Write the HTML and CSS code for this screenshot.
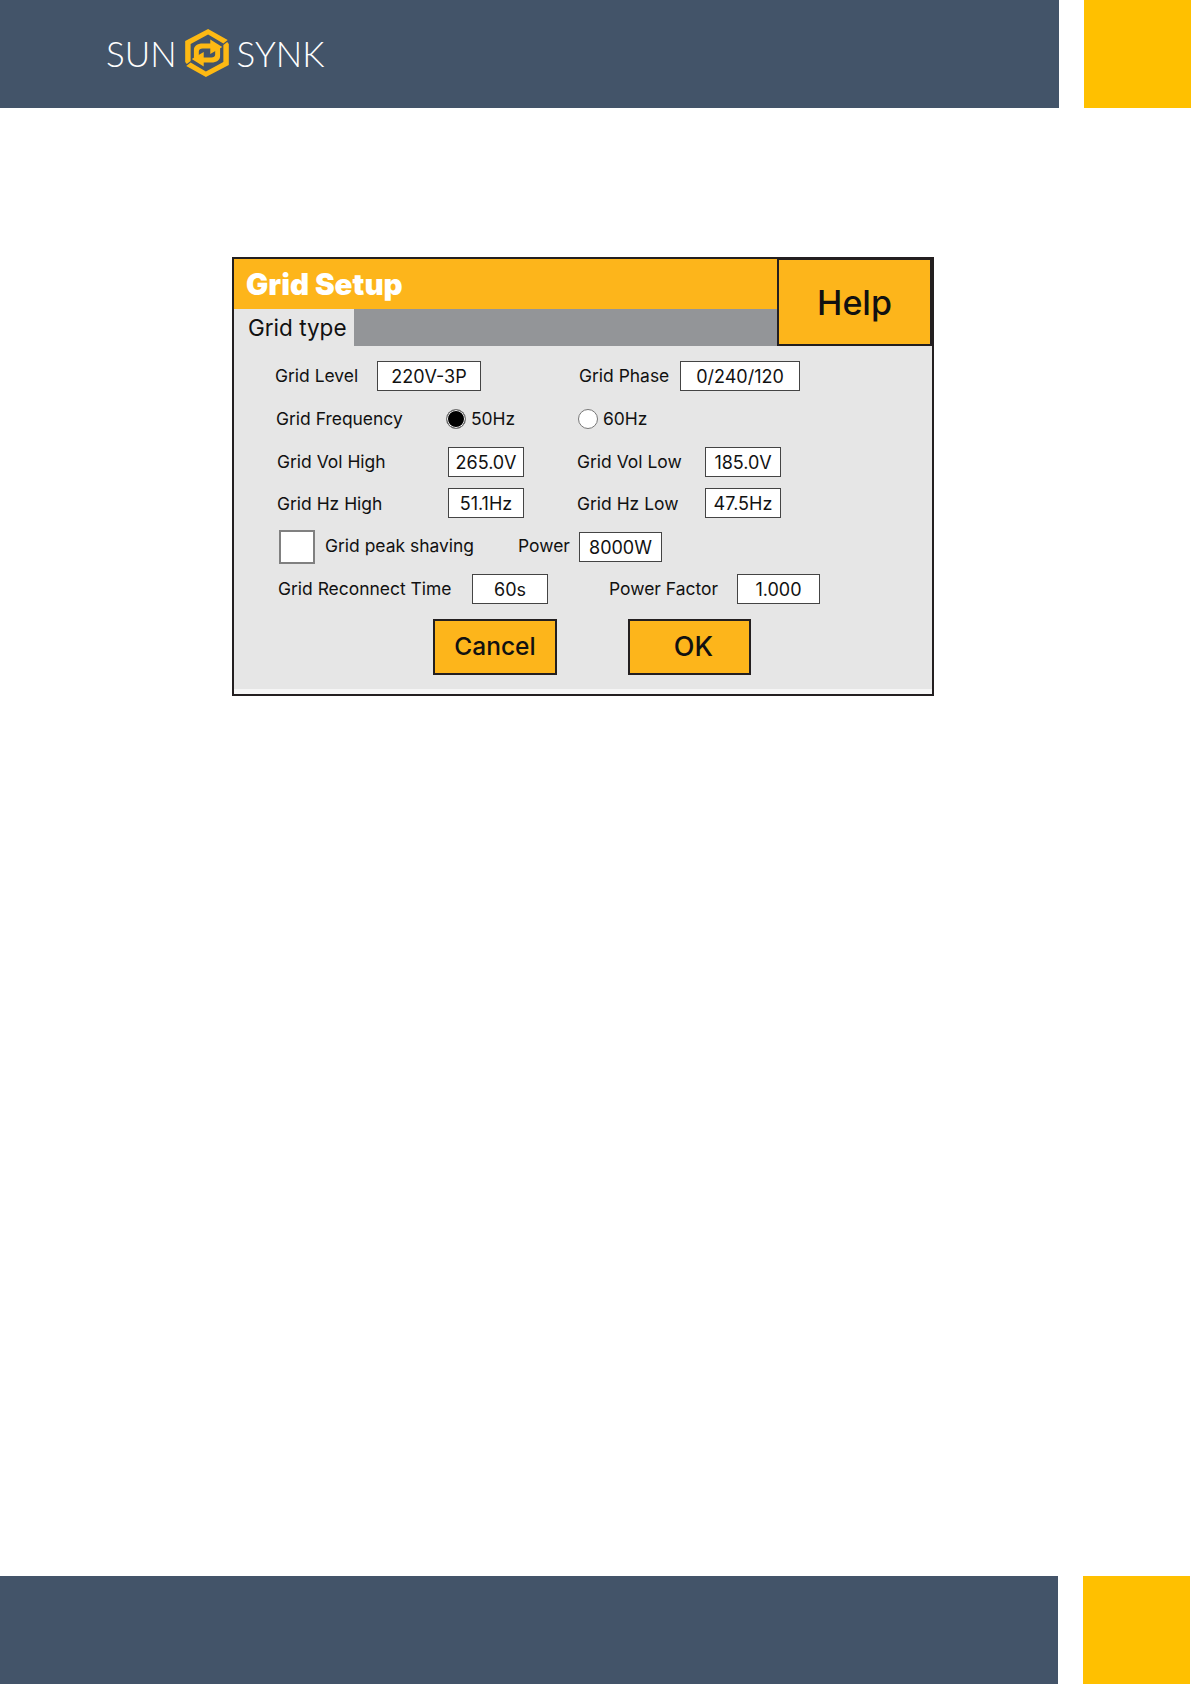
FILE: index.html
```html
<!DOCTYPE html>
<html lang="en">
<head>
<meta charset="utf-8">
<title>Grid Setup</title>
<link rel="stylesheet" href="styles.css">
</head>
<body>
<div class="page">
  <header class="band band-top">
    <div class="navy navy-top">
      <div class="logo">
        <span class="logo-word">SUN</span>
        <svg class="logo-mark" viewBox="8 5 44 52" width="48" height="52" preserveAspectRatio="none" aria-hidden="true">
          <path d="M10 19L31 7L49 18L45 21.500L31 12.500L15 22V39L11.500 42L10 40Z" fill="#fdb913"/>
          <path d="M50 43L29 55L11 44L15 40.500L29 49.500L45 40V23L48.500 20L50 22Z" fill="#fdb913"/>
          <path d="M44 25L33 17.500V21.500H26C21 21.500 18 24 18 28V38L22.500 34V29.500C22.500 27.500 24 26.500 26 26.500H33V32Z" fill="#fdb913"/>
          <path d="M16 37L27 44.500V40.500H34C39 40.500 42 38 42 34V24L37.500 28V32.500C37.500 34.500 36 35.500 34 35.500H27V30Z" fill="#fdb913"/>
        </svg>
        <span class="logo-word">SYNK</span>
      </div>
    </div>
    <div class="gold-tab gold-top"></div>
  </header>

  <main class="content">
    <section class="dialog">
      <div class="dialog-head">
        <div class="head-left">
          <div class="title-bar">Grid Setup</div>
          <div class="tab-bar"><span class="tab">Grid type</span></div>
        </div>
        <div class="help">Help</div>
      </div>
      <div class="dialog-body">
        <div class="row row-1">
          <span class="lbl l1a">Grid Level</span>
          <span class="box b1a">220V-3P</span>
          <span class="lbl l1b">Grid Phase</span>
          <span class="box b1b">0/240/120</span>
        </div>
        <div class="row row-2">
          <span class="lbl l2a">Grid Frequency</span>
          <span class="radio radio-on"></span>
          <span class="lbl l2b">50Hz</span>
          <span class="radio radio-off"></span>
          <span class="lbl l2c">60Hz</span>
        </div>
        <div class="row row-3">
          <span class="lbl l3a">Grid Vol High</span>
          <span class="box b3">265.0V</span>
          <span class="lbl l3b">Grid Vol Low</span>
          <span class="box b3">185.0V</span>
        </div>
        <div class="row row-4">
          <span class="lbl l3a">Grid Hz High</span>
          <span class="box b3">51.1Hz</span>
          <span class="lbl l3b">Grid Hz Low</span>
          <span class="box b3">47.5Hz</span>
        </div>
        <div class="row row-5">
          <span class="check"></span>
          <span class="lbl l5a">Grid peak shaving</span>
          <span class="lbl l5b">Power</span>
          <span class="box b5">8000W</span>
        </div>
        <div class="row row-6">
          <span class="lbl l6a">Grid Reconnect Time</span>
          <span class="box b6a">60s</span>
          <span class="lbl l6b">Power Factor</span>
          <span class="box b6b">1.000</span>
        </div>
        <div class="row row-7">
          <span class="btn">Cancel</span>
          <span class="btn btn-ok">OK</span>
        </div>
      </div>
      <div class="dialog-foot"></div>
    </section>
  </main>

  <footer class="band band-bottom">
    <div class="navy navy-bottom"></div>
    <div class="gold-tab gold-bottom"></div>
  </footer>
</div>
</body>
</html>
```
FILE: styles.css
```css
* { box-sizing: border-box; }
html, body { margin: 0; padding: 0; background: #fff; }
body { font-family: "Inter", "Liberation Sans", sans-serif; color: #111; }
.page { width: 1191px; height: 1684px; display: flex; flex-direction: column; overflow: hidden; }

.band { display: flex; flex: none; }
.band-top { height: 108px; }
.band-bottom { height: 108px; }
.navy { background: #435469; }
.navy-top { width: 1059px; padding-left: 106px; padding-bottom: 2px; display: flex; align-items: center; }
.navy-bottom { width: 1058px; }
.gold-tab { background: #ffc000; width: 107px; }
.gold-top { margin-left: 25px; }
.gold-bottom { margin-left: 25px; }

.logo { display: flex; align-items: center; gap: 6px; color: #fff; }
.logo-word { font-family: "Lato", sans-serif; font-weight: 300; font-size: 35px; line-height: 1; }
.logo-mark { flex: none; display: block; }

.content { flex: 1; padding: 149px 0 0 232px; }
.dialog { width: 702px; height: 439px; border: 2px solid #231f20; display: flex; flex-direction: column; background: #fff; }
.dialog-head { display: flex; height: 87px; flex: none; }
.head-left { flex: 1; display: flex; flex-direction: column; }
.title-bar { height: 50px; flex: none; background: #fdb51b; color: #fff; font-weight: 900; font-size: 29.600px; line-height: 50px; padding-left: 12px; }
.tab-bar { flex: 1; background: #939598; }
.tab { display: block; width: 120px; height: 37px; background: #e6e6e6; font-size: 22.500px; line-height: 37px; padding-left: 14px; }
.help { width: 155px; margin-top: -1px; height: 88px; background: #fdb51b; border: 2px solid #231f20; color: #111; font-size: 34px; font-weight: 500; display: flex; align-items: center; justify-content: center; }

.dialog-body { flex: 1; background: #e6e6e6; padding-top: 15px; }
.dialog-foot { height: 5px; flex: none; background: #f6f6f6; }

.row { display: flex; align-items: center; height: 30px; font-size: 17.450px; }
.lbl { white-space: nowrap; flex: none; padding-bottom: 2px; }
.box { flex: none; height: 30px; background: #fff; border: 1.500px solid #444; color: #111; display: flex; align-items: center; justify-content: center; font-size: 18px; }

.l1a { width: 102px; margin-left: 41px; }
.b1a { width: 104px; }
.l1b { width: 101px; margin-left: 98px; }
.b1b { width: 120px; }

.row-2 { margin-top: 13px; }
.l2a { width: 170px; margin-left: 42px; }
.radio { flex: none; width: 20px; height: 20px; border-radius: 50%; border: 1.500px solid #777; background: #fff; }
.radio-on { background: #000; box-shadow: inset 0 0 0 1px #fff; }
.l2b { width: 107px; margin-left: 5px; }
.l2c { margin-left: 5px; }

.row-3 { margin-top: 13px; }
.row-4 { margin-top: 11px; }
.l3a { width: 171px; margin-left: 43px; }
.b3 { width: 76px; }
.l3b { width: 128px; margin-left: 53px; }
.row-4 .lbl { padding-bottom: 0; }

.row-5 { margin-top: 12px; height: 34px; }
.row-5 .lbl { padding-bottom: 4px; }
.check { flex: none; width: 36px; height: 34px; margin-left: 45px; background: #fff; border: 2px solid #808080; }
.l5a { width: 193px; margin-left: 10px; }
.l5b { width: 61px; }
.b5 { width: 83px; }

.row-6 { margin-top: 10px; }
.l6a { width: 194px; margin-left: 44px; }
.b6a { width: 76px; }
.l6b { width: 128px; margin-left: 61px; }
.b6b { width: 83px; }

.row-7 { margin-top: 15px; height: 56px; }
.btn { flex: none; width: 124px; height: 56px; background: #fdb51b; border: 2px solid #231f20; font-size: 24.500px; font-weight: 500; display: flex; align-items: center; justify-content: center; margin-left: 199px; padding-bottom: 2px; }
.btn-ok { width: 123px; margin-left: 71px; padding-left: 8px; font-size: 27px; }
```
